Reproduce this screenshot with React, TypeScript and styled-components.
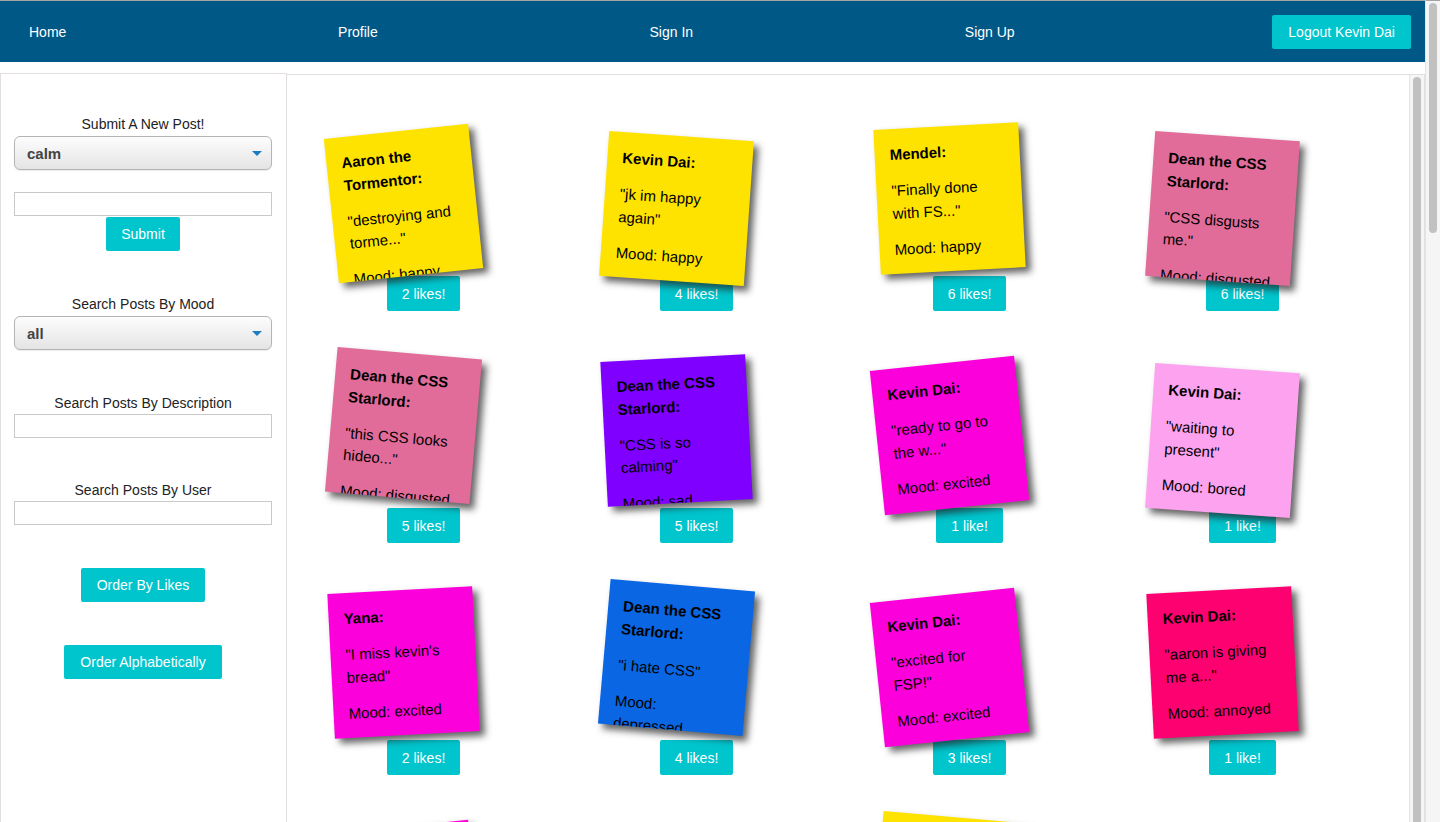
import React from "react";
import styled, { createGlobalStyle } from "styled-components";

const GlobalStyle = createGlobalStyle`
  html, body { margin: 0; padding: 0; background: #fff; }
  body { font-family: "Liberation Sans", Arial, sans-serif; color: #222; }
  * { box-sizing: border-box; }
`;

const FONT = `"Liberation Sans", Arial, Helvetica, sans-serif`;

const Page = styled.div`
  width: calc(100% - 15px);
`;

const Rail = styled.div`
  width: 15px;
  flex: none;
  background: #f5f5f5;
  border-left: 1px solid #e4e4e4;
  padding: 2px 3px 0 3px;
`;

const PageRail = styled(Rail)`
  position: fixed;
  top: 0;
  right: 0;
  height: 100vh;
  border-top: 1px solid #a3a3a3;
`;

const Thumb = styled.div<{ $h: number }>`
  height: ${(p) => p.$h}px;
  border-radius: 5px;
  background: #c1c1c1;
`;

const NavBar = styled.nav`
  height: 62px;
  border-top: 1px solid #a3a3a3;
  background: #005887;
  display: flex;
  align-items: center;
  justify-content: space-between;
  padding: 0 14px 0 15px;
`;

const NavLink = styled.a`
  color: #fff;
  font-size: 14px;
  line-height: 16px;
  padding: 0 14px;
  text-decoration: none;
`;

const ActionButton = styled.button<{ $h?: number; $mt?: number; $px?: number }>`
  background: #00c5cd;
  color: #fff;
  border: none;
  border-radius: 2px;
  font: 14px ${FONT};
  padding: 0 ${(p) => p.$px ?? 15}px;
  height: ${(p) => p.$h ?? 34}px;
  margin-top: ${(p) => p.$mt ?? 0}px;
  flex: none;
  cursor: pointer;
`;

const Main = styled.main`
  display: flex;
  align-items: flex-start;
  margin-top: 11px;
`;

const Sidebar = styled.aside`
  width: 287px;
  flex: none;
  height: 2841px;
  border: 1px solid #e3dfe0;
  border-bottom: none;
  padding: 42px 14px 0 13px;
  display: flex;
  flex-direction: column;
  align-items: center;
`;

const Label = styled.div<{ $mt?: number }>`
  font-size: 14px;
  line-height: 16px;
  color: #222;
  text-align: center;
  margin-top: ${(p) => p.$mt ?? 0}px;
`;

const SelectWrap = styled.div<{ $mt?: number }>`
  position: relative;
  width: 258px;
  height: 34px;
  margin-top: ${(p) => p.$mt ?? 0}px;
`;

const Select = styled.select`
  appearance: none;
  -webkit-appearance: none;
  width: 100%;
  height: 100%;
  border: 1px solid #b4b4b4;
  border-radius: 6px;
  background: linear-gradient(#fdfdfd, #e4e4e4);
  box-shadow: 0 1px 1px rgba(0, 0, 0, 0.08);
  font: bold 15px ${FONT};
  color: #444;
  padding: 0 30px 0 12px;
  outline: none;
`;

const Arrow = styled.span`
  position: absolute;
  right: 10px;
  top: 15px;
  width: 0;
  height: 0;
  border-left: 5px solid transparent;
  border-right: 5px solid transparent;
  border-top: 5px solid #1c7dc1;
  pointer-events: none;
`;

const TextInput = styled.input<{ $mt?: number }>`
  width: 258px;
  height: 24px;
  border: 1px solid #c9c9c9;
  border-radius: 0;
  margin: ${(p) => p.$mt ?? 0}px 0 0;
  padding: 0 4px;
  font: 14px ${FONT};
  outline: none;
`;

const NotesPanel = styled.section`
  flex: 1;
  height: 2840px;
  margin-top: 1px;
  border-top: 1px solid #e3dfe0;
  border-right: 1px solid #e3dfe0;
  display: flex;
`;

const NotesViewport = styled.div`
  flex: 1;
  min-width: 0;
  overflow: hidden;
`;

const NotesGrid = styled.div`
  display: grid;
  grid-template-columns: repeat(4, 273px);
  row-gap: 52px;
  padding: 56px 0 60px;
`;

const Cell = styled.div`
  display: flex;
  flex-direction: column;
`;

const Note = styled.div<{ $bg: string; $rot: number; $top: number }>`
  position: relative;
  top: ${(p) => p.$top}px;
  align-self: flex-start;
  margin-left: 44px;
  width: 145px;
  height: 145px;
  padding: 15px;
  overflow: hidden;
  background: ${(p) => p.$bg};
  color: #000;
  font: 15px/22.5px ${FONT};
  box-shadow: 5px 5px 7px rgba(33, 33, 33, 0.7);
  transform: rotate(${(p) => p.$rot}deg);
`;

const NoteTitle = styled.h4`
  margin: 0;
  font: bold 15px/22.5px ${FONT};
`;

const NoteText = styled.p`
  margin: 13.5px 0 0;
`;

const LikeButton = styled(ActionButton)`
  align-self: center;
`;

const COLORS: Record<string, string> = {
  happy: "#ffe300",
  disgusted: "#e16c99",
  sad: "#7f00ff",
  excited: "#fc00dc",
  bored: "#fda2ef",
  depressed: "#0a66e3",
  annoyed: "#fe0171",
  calm: "#7fd3ff",
};

type Post = { user: string; text: string; mood: string; likes: number };

const BASE: Post[] = [
  { user: "Aaron the Tormentor", text: "destroying and torme...", mood: "happy", likes: 2 },
  { user: "Kevin Dai", text: "jk im happy again", mood: "happy", likes: 4 },
  { user: "Mendel", text: "Finally done with FS...", mood: "happy", likes: 6 },
  { user: "Dean the CSS Starlord", text: "CSS disgusts me.", mood: "disgusted", likes: 6 },
  { user: "Dean the CSS Starlord", text: "this CSS looks hideo...", mood: "disgusted", likes: 5 },
  { user: "Dean the CSS Starlord", text: "CSS is so calming", mood: "sad", likes: 5 },
  { user: "Kevin Dai", text: "ready to go to the w...", mood: "excited", likes: 1 },
  { user: "Kevin Dai", text: "waiting to present", mood: "bored", likes: 1 },
  { user: "Yana", text: "I miss kevin's bread", mood: "excited", likes: 2 },
  { user: "Dean the CSS Starlord", text: "i hate CSS", mood: "depressed", likes: 4 },
  { user: "Kevin Dai", text: "excited for FSP!", mood: "excited", likes: 3 },
  { user: "Kevin Dai", text: "aaron is giving me a...", mood: "annoyed", likes: 1 },
  { user: "Yana", text: "so ready for demo day", mood: "excited", likes: 1 },
  { user: "Mendel", text: "need more coffee", mood: "calm", likes: 1 },
  { user: "Aaron the Tormentor", text: "sunny day today", mood: "happy", likes: 1 },
  { user: "Kevin Dai", text: "bugs everywhere", mood: "annoyed", likes: 0 },
];

const POSTS: Post[] = Array.from({ length: 52 }, (_, i) => BASE[i % BASE.length]);

function placement(n: number) {
  // n is 1-based, mirrors nth-child rules
  let rot = -6;
  let top = 0;
  if (n % 2 === 0) { rot = 4; top = 5; }
  if (n % 3 === 0) { rot = -3; top = -5; }
  if (n % 5 === 0) { rot = 5; top = -10; }
  return { rot, top };
}

export default function App() {
  return (
    <>
      <GlobalStyle />
      <Page>
        <NavBar>
          <NavLink href="#">Home</NavLink>
          <NavLink href="#">Profile</NavLink>
          <NavLink href="#">Sign In</NavLink>
          <NavLink href="#">Sign Up</NavLink>
          <ActionButton $px={16}>Logout Kevin Dai</ActionButton>
        </NavBar>
        <Main>
          <Sidebar>
            <Label>Submit A New Post!</Label>
            <SelectWrap $mt={4}>
              <Select defaultValue="calm">
                <option value="calm">calm</option>
                <option value="happy">happy</option>
                <option value="sad">sad</option>
              </Select>
              <Arrow />
            </SelectWrap>
            <TextInput $mt={22} />
            <ActionButton $mt={1}>Submit</ActionButton>

            <Label $mt={45}>Search Posts By Mood</Label>
            <SelectWrap $mt={4}>
              <Select defaultValue="all">
                <option value="all">all</option>
                <option value="happy">happy</option>
              </Select>
              <Arrow />
            </SelectWrap>

            <Label $mt={45}>Search Posts By Description</Label>
            <TextInput $mt={3} />

            <Label $mt={44}>Search Posts By User</Label>
            <TextInput $mt={3} />

            <ActionButton $mt={43} $px={16}>Order By Likes</ActionButton>
            <ActionButton $mt={43} $px={16}>Order Alphabetically</ActionButton>
          </Sidebar>
          <NotesPanel>
            <NotesViewport>
              <NotesGrid>
                {POSTS.map((p, i) => {
                  const { rot, top } = placement(i + 1);
                  return (
                    <Cell key={i}>
                      <Note $bg={COLORS[p.mood]} $rot={rot} $top={top}>
                        <NoteTitle>{p.user}:</NoteTitle>
                        <NoteText>"{p.text}"</NoteText>
                        <NoteText>Mood: {p.mood}</NoteText>
                      </Note>
                      <LikeButton $h={35}>
                        {p.likes} {p.likes === 1 ? "like!" : "likes!"}
                      </LikeButton>
                    </Cell>
                  );
                })}
              </NotesGrid>
            </NotesViewport>
            <Rail>
              <Thumb $h={2600} />
            </Rail>
          </NotesPanel>
        </Main>
      </Page>
      <PageRail>
        <Thumb $h={230} />
      </PageRail>
    </>
  );
}
